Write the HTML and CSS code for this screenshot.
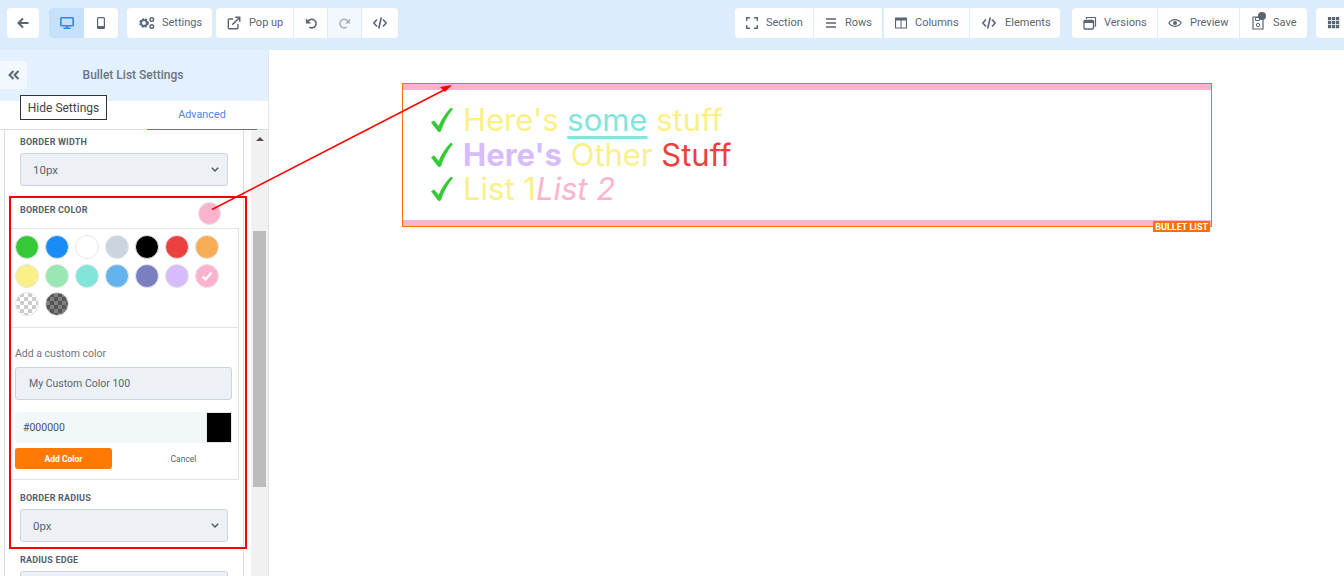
FILE: index.html
```html
<!DOCTYPE html>
<html lang="en">

<head>
    <meta charset="UTF-8">
    <meta name="viewport" content="width=device-width, initial-scale=1.0">
    <title>Bullet List Settings</title>
    <link rel="stylesheet" href="styles.css">
</head>

<body>
    <header class="toolbar">
        <div class="group">
            <button class="tool icon-only back"><svg width="12" height="12" viewBox="0 0 12 12"><path d="M11.500 6H2M6 1.500 1.500 6 6 10.500" fill="none" stroke="#5a6573" stroke-width="2"/></svg></button>
        </div>
        <div class="group devices">
            <button class="tool device active"><svg width="14" height="12" viewBox="0 0 14 12"><rect x=".8" y=".8" width="12.400" height="7.900" rx=".8" fill="none" stroke="#2b86e8" stroke-width="1.600"/><path d="M3.500 11.200h7M7 9v2" stroke="#2b86e8" stroke-width="1.500"/></svg></button>
            <button class="tool device"><svg width="8" height="12" viewBox="0 0 8 12"><rect x=".6" y=".6" width="6.800" height="10.800" rx="1" fill="none" stroke="#5a6573" stroke-width="1.200"/><path d="M.6 9h6.800v2.400H.6z" fill="#5a6573"/></svg></button>
        </div>
        <div class="group">
            <button class="tool settings"><svg width="16" height="16" viewBox="0 0 16 16"><circle cx="5" cy="8" r="3.700" fill="none" stroke="#5a6573" stroke-width="2.200" stroke-dasharray="2 1"/><circle cx="5" cy="8" r="2.800" fill="none" stroke="#5a6573" stroke-width="1.700"/><circle cx="12.800" cy="4.500" r="1.800" fill="none" stroke="#5a6573" stroke-width="1.400"/><circle cx="12.800" cy="11.500" r="1.800" fill="none" stroke="#5a6573" stroke-width="1.400"/></svg>Settings</button>
        </div>
        <div class="group popup-group">
            <button class="tool popup"><svg width="14" height="14" viewBox="0 0 16 16"><path d="M12.500 9v4.500a1 1 0 0 1-1 1h-9a1 1 0 0 1-1-1v-9a1 1 0 0 1 1-1H7" fill="none" stroke="#5a6573" stroke-width="1.600"/><path d="M6 10 14 2M9.500 1.500h5v5" fill="none" stroke="#5a6573" stroke-width="1.800"/></svg>Pop up</button>
            <button class="tool icon-only undo"><svg width="12" height="12" viewBox="0 0 14 14"><path d="M3 6.500A5 5 0 1 1 5 11.800" fill="none" stroke="#5a6573" stroke-width="1.800"/><path d="M1 1.500v6h6z" fill="#5a6573"/></svg></button>
            <button class="tool icon-only redo"><svg width="12" height="12" viewBox="0 0 14 14"><path d="M11 6.500A5 5 0 1 0 9 11.800" fill="none" stroke="#a9b2bd" stroke-width="1.800"/><path d="M13 1.500v6H7z" fill="#a9b2bd"/></svg></button>
            <button class="tool icon-only code"><svg width="14" height="14" viewBox="0 0 14 14"><path d="M4 3.500.8 7 4 10.500M10 3.500 13.200 7 10 10.500M8.300 1.500 5.700 12.500" fill="none" stroke="#5a6573" stroke-width="1.600"/></svg></button>
        </div>
        <div class="spacer"></div>
        <div class="group">
            <button class="tool section"><svg width="12" height="12" viewBox="0 0 12 12"><path d="M.7 4V.7H4M8 .7h3.300V4M11.300 8v3.300H8M4 11.300H.7V8" fill="none" stroke="#5a6573" stroke-width="1.400"/></svg>Section</button>
            <button class="tool rows"><svg width="12" height="12" viewBox="0 0 12 12"><path d="M1 2h10M1 6h10M1 10h10" stroke="#5a6573" stroke-width="1.400"/></svg>Rows</button>
            <button class="tool columns"><svg width="12" height="12" viewBox="0 0 12 12"><path d="M.5 1h11v10H.5z" fill="none" stroke="#5a6573" stroke-width="1.200"/><path d="M.5 1h11v2.500H.5zM5.500 1h1v10h-1z" fill="#5a6573"/></svg>Columns</button>
            <button class="tool elements"><svg width="14" height="14" viewBox="0 0 14 14"><path d="M4 3.500.8 7 4 10.500M10 3.500 13.200 7 10 10.500M8.300 1.500 5.700 12.500" fill="none" stroke="#5a6573" stroke-width="1.600"/></svg>Elements</button>
        </div>
        <div class="group publish-group">
            <button class="tool versions"><svg width="14" height="14" viewBox="0 0 14 14"><rect x="1" y="4.500" width="9.500" height="8.500" rx="1" fill="none" stroke="#5a6573" stroke-width="1.300"/><path d="M1 5h9.500v2H1z" fill="#5a6573"/><path d="M3.500 3V1.500h9V10H11.500" fill="none" stroke="#5a6573" stroke-width="1.200"/></svg>Versions</button>
            <button class="tool preview"><svg width="14" height="14" viewBox="0 0 14 14"><path d="M.8 7C3.800 2.600 10.200 2.600 13.200 7 10.200 11.400 3.800 11.400.8 7z" fill="none" stroke="#5a6573" stroke-width="1.200"/><circle cx="7" cy="7" r="2" fill="#5a6573"/></svg>Preview</button>
            <button class="tool save"><svg width="14" height="14" viewBox="0 0 14 14"><path d="M2 1h8.500L12 2.500V13H2z" fill="none" stroke="#5a6573" stroke-width="1.200"/><path d="M4.500 1.500h4v3h-4z" fill="none" stroke="#5a6573"/><circle cx="7" cy="9" r="1.700" fill="none" stroke="#5a6573"/></svg><span class="dot"></span>Save</button>
        </div>
        <div class="group grid-group">
            <button class="tool grid-btn"><svg width="13" height="13" viewBox="0 0 14 14"><path d="M1 1h3.500v3.500H1zM5.300 1h3.500v3.500H5.300zM9.600 1h3.500v3.500H9.600zM1 5.300h3.500v3.500H1zM5.300 5.300h3.500v3.500H5.300zM9.600 5.300h3.500v3.500H9.600zM1 9.600h3.500v3.500H1zM5.300 9.600h3.500v3.500H5.300zM9.600 9.600h3.500v3.500H9.600z" fill="#5a6573"/></svg></button>
        </div>
    </header>

    <div class="main">
        <aside class="sidebar">
            <div class="side-head">
                <button class="collapse"><svg width="12" height="10" viewBox="0 0 12 10"><path d="M5.500 1 1.500 5l4 4M10.500 1l-4 4 4 4" fill="none" stroke="#5a6573" stroke-width="2"/></svg></button>
                <h2>Bullet List Settings</h2>
                <span class="hint">Hide Settings</span>
            </div>
            <div class="tabs">
                <span class="tab">Advanced</span>
            </div>
            <div class="side-body">
                <div class="panel">
                    <div class="field width-field">
                        <label>BORDER WIDTH</label>
                        <div class="select">10px<svg width="8" height="5" viewBox="0 0 8 5"><path d="M.8.8 4 4 7.200.8" fill="none" stroke="#4a5565" stroke-width="1.400"/></svg></div>
                    </div>
                    <div class="color-head">
                        <label>BORDER COLOR</label>
                        <span class="current"></span>
                    </div>
                    <div class="picker">
                        <div class="swatches">
                            <span class="sw s-green"></span><span class="sw s-blue"></span><span class="sw s-white"></span><span class="sw s-grey"></span><span class="sw s-black"></span><span class="sw s-red"></span><span class="sw s-orange"></span>
                            <span class="sw s-yellow"></span><span class="sw s-mint"></span><span class="sw s-teal"></span><span class="sw s-sky"></span><span class="sw s-indigo"></span><span class="sw s-lilac"></span>
                            <span class="sw s-pink"><svg width="12" height="10" viewBox="0 0 12 10"><path d="M1.500 5.500 4.500 8.500 10.500 1.500" fill="none" stroke="#fff" stroke-width="2.200"/></svg></span>
                            <span class="sw s-clear"></span><span class="sw s-dark"></span>
                        </div>
                        <div class="custom">
                            <p class="custom-title">Add a custom color</p>
                            <div class="name-input">My Custom Color 100</div>
                            <div class="hex-row">
                                <span class="hex">#000000</span>
                                <span class="hex-sample"></span>
                            </div>
                            <div class="actions">
                                <button class="add">Add Color</button>
                                <button class="cancel">Cancel</button>
                            </div>
                        </div>
                    </div>
                    <div class="field radius-field">
                        <label>BORDER RADIUS</label>
                        <div class="select">0px<svg width="8" height="5" viewBox="0 0 8 5"><path d="M.8.8 4 4 7.200.8" fill="none" stroke="#4a5565" stroke-width="1.400"/></svg></div>
                    </div>
                    <div class="field edge-field">
                        <label>RADIUS EDGE</label>
                        <div class="select"></div>
                    </div>
                    <div class="red-box"></div>
                </div>
                <div class="scrollbar">
                    <span class="arrow"></span>
                    <span class="thumb"></span>
                </div>
            </div>
        </aside>

        <main class="canvas">
            <section class="bullet-block">
                <ul class="bullets">
                    <li><svg class="check" width="26" height="26" viewBox="0 0 26 26"><path d="M1.500 15.500 4 13.800 8.800 19.500C11.500 12.500 15.500 6.500 21 1L22.500 2C17 9 13 16 10.700 24Q9.500 25.500 8 24Z" fill="#35c935" stroke="#35c935" stroke-width=".8" stroke-linejoin="round"/></svg><span class="t-yellow">Here's <u class="t-teal">some</u> stuff</span></li>
                    <li><svg class="check" width="26" height="26" viewBox="0 0 26 26"><path d="M1.500 15.500 4 13.800 8.800 19.500C11.500 12.500 15.500 6.500 21 1L22.500 2C17 9 13 16 10.700 24Q9.500 25.500 8 24Z" fill="#35c935" stroke="#35c935" stroke-width=".8" stroke-linejoin="round"/></svg><span class="t-yellow"><b class="t-lilac">Here's</b> Other <span class="t-red">Stuff</span></span></li>
                    <li><svg class="check" width="26" height="26" viewBox="0 0 26 26"><path d="M1.500 15.500 4 13.800 8.800 19.500C11.500 12.500 15.500 6.500 21 1L22.500 2C17 9 13 16 10.700 24Q9.500 25.500 8 24Z" fill="#35c935" stroke="#35c935" stroke-width=".8" stroke-linejoin="round"/></svg><span class="t-yellow">List 1<i class="t-pink">List 2</i></span></li>
                </ul>
                <span class="tag">BULLET LIST</span>
            </section>
        </main>
    </div>

    <svg class="arrow-over" width="1344" height="576" viewBox="0 0 1344 576">
        <path d="M212 209.500 445 89.500" stroke="#f00" stroke-width="1.500" fill="none"/>
        <path d="M452 85 440 87 445 92z" fill="#f00"/>
    </svg>
</body>

</html>
```
FILE: styles.css
```css
* {
    margin: 0;
    padding: 0;
    box-sizing: border-box;
}

html,
body {
    height: 576px;
    overflow: hidden;
}

body {
    font-family: Roboto, "Liberation Sans", sans-serif;
    background-color: #fff;
    color: #4a5565;
    position: relative;
}

button {
    font-family: inherit;
    border: none;
    cursor: pointer;
}

svg {
    flex: none;
}

/* Top toolbar */
.toolbar {
    display: flex;
    height: 50px;
    padding: 8px 0 12px 7px;
    background-color: #dcecfd;
    gap: 9px;
    overflow: hidden;
}

.group {
    display: flex;
    gap: 1px;
    border-radius: 4px;
    overflow: hidden;
}

.devices {
    margin-left: 1px;
    gap: 0;
}

.popup-group {
    margin-left: -5px;
}

.publish-group {
    margin-left: 3px;
}

.spacer {
    flex: 1;
}

.tool {
    display: flex;
    flex: none;
    align-items: center;
    gap: 8px;
    height: 30px;
    padding: 0 0 1px 11px;
    background-color: #fff;
    color: #5a6573;
    font-size: 11px;
    white-space: nowrap;
}

.icon-only {
    justify-content: center;
    padding: 0 0 1px;
}

.back {
    width: 32px;
}

.device {
    width: 34px;
    justify-content: center;
    padding: 0 0 1px;
}

.device.active {
    width: 35px;
    background-color: #c6e1fc;
}

.settings {
    width: 85px;
    padding-left: 12px;
    gap: 7px;
}

.popup {
    width: 77px;
}

.undo {
    width: 33px;
}

.redo {
    width: 33px;
    background-color: #f3f8fe;
}

.code {
    width: 36px;
}

.section {
    width: 78px;
}

.rows {
    width: 68px;
}

.columns {
    width: 85px;
    margin-left: 1px;
}

.elements {
    width: 90px;
    padding-left: 12px;
    gap: 9px;
}

.versions {
    width: 85px;
    gap: 7px;
}

.preview {
    width: 81px;
    padding-left: 10px;
}

.save {
    width: 67px;
    position: relative;
}

.dot {
    position: absolute;
    top: 4px;
    left: 18px;
    width: 8px;
    height: 8px;
    border-radius: 50%;
    background-color: #5a6573;
}

.grid-group {
    margin-right: -12px;
}

.grid-btn {
    width: 40px;
}

/* Sidebar */
.main {
    display: flex;
    height: 526px;
}

.sidebar {
    width: 269px;
    flex: none;
    border-right: 1px solid #e1e5ea;
    display: flex;
    flex-direction: column;
}

.side-head {
    height: 51px;
    padding: 0 2px 2px 0;
    background-color: #e3f1fe;
    display: flex;
    align-items: center;
    justify-content: center;
    position: relative;
}

.side-head h2 {
    font-size: 12px;
    font-weight: 500;
    color: #6b7480;
}

.collapse {
    position: absolute;
    left: 0;
    top: 11px;
    width: 27px;
    height: 28px;
    background-color: #f3f8fe;
    border-radius: 0 4px 4px 0;
}

.hint {
    position: absolute;
    left: 20px;
    top: 45px;
    width: 87px;
    height: 25px;
    border: 1px solid #333;
    background-color: #fff;
    color: #444;
    font-size: 12px;
    line-height: 25px;
    text-align: center;
    z-index: 2;
}

.tabs {
    height: 29px;
    border-bottom: 1px solid #d9dde2;
    position: relative;
}

.tab {
    position: absolute;
    left: 147px;
    width: 110px;
    height: 29px;
    border-bottom: 1px solid #2a84e4;
    color: #4f82e8;
    font-size: 10.800px;
    line-height: 27px;
    text-align: center;
}

.side-body {
    flex: 1;
    display: flex;
    min-height: 0;
}

.panel {
    width: 240px;
    margin-left: 4px;
    border: solid #d5dbe3;
    border-width: 0 1px;
    position: relative;
    flex: none;
}

.scrollbar {
    width: 17px;
    margin-left: 7px;
    background-color: #f1f1f1;
    position: relative;
    flex: none;
}

.arrow {
    position: absolute;
    top: 7px;
    left: 5px;
    border: solid transparent;
    border-width: 0 4px 4px;
    border-bottom-color: #505050;
}

.thumb {
    position: absolute;
    top: 101px;
    left: 2px;
    width: 13px;
    height: 256px;
    background-color: #bcbcbc;
}

label {
    display: block;
    font-size: 9px;
    font-weight: 700;
    letter-spacing: 0.2px;
    color: #555f6d;
}

.field {
    padding: 0 15px;
}

.width-field {
    padding-top: 7px;
    height: 68px;
}

.select {
    height: 33px;
    margin-top: 6px;
    padding: 0 8px 0 12px;
    display: flex;
    align-items: center;
    justify-content: space-between;
    background-color: #edf1f6;
    border: 1px solid #cbd5e0;
    border-radius: 3px;
    font-size: 11.500px;
    color: #5a6573;
}

.color-head {
    height: 30px;
    padding: 7px 22px 0 15px;
    display: flex;
    justify-content: space-between;
    align-items: flex-start;
}

.current {
    width: 23px;
    height: 23px;
    margin-top: -3px;
    border-radius: 50%;
    background-color: #fdb3cd;
    border: 1px solid #e4e7eb;
}

.picker {
    margin-left: 4px;
    width: 230px;
    height: 252px;
    border: 1px solid #dfe3ea;
}

.swatches {
    height: 99px;
    padding: 6px 0 0 5px;
    display: grid;
    grid-template-columns: repeat(7, 24px);
    grid-auto-rows: 24px;
    column-gap: 6px;
    row-gap: 4.500px;
    border-bottom: 1px solid #dfe3ea;
}

.sw {
    width: 24px;
    height: 24px;
    border-radius: 50%;
    border: 1px solid #e4e7eb;
    display: flex;
    align-items: center;
    justify-content: center;
}

.s-green { background-color: #35c935; }
.s-blue { background-color: #1a8cf5; }
.s-white { background-color: #fff; }
.s-grey { background-color: #cbd5e0; }
.s-black { background-color: #000; }
.s-red { background-color: #eb4040; }
.s-orange { background-color: #f6ad55; }
.s-yellow { background-color: #faf089; }
.s-mint { background-color: #9ae6b4; }
.s-teal { background-color: #81e6d9; }
.s-sky { background-color: #63b3ed; }
.s-indigo { background-color: #7a7fbf; }
.s-lilac { background-color: #d6bcfa; }
.s-pink { background-color: #fdb3cd; }

.s-clear {
    background: repeating-conic-gradient(#ccc 0 25%, #fff 0 50%) 0 0 / 8px 8px;
}

.s-dark {
    background: repeating-conic-gradient(#555 0 25%, #808080 0 50%) 0 0 / 8px 8px;
}

.custom {
    padding: 19px 6px 0 5px;
}

.custom-title {
    font-size: 10.500px;
    color: #6b7480;
    margin-bottom: 7px;
}

.name-input {
    height: 33px;
    padding-left: 13px;
    background-color: #edf1f6;
    border: 1px solid #cbd5e0;
    border-radius: 3px;
    font-size: 10.500px;
    line-height: 31px;
    color: #5a6573;
}

.hex-row {
    display: flex;
    justify-content: space-between;
    height: 31px;
    margin-top: 12px;
    background-color: #f2f7fa;
    border-radius: 3px 0 0 3px;
}

.hex {
    padding-left: 8px;
    font-size: 10.500px;
    line-height: 31px;
}

.hex-sample {
    width: 26px;
    background-color: #000;
    border: 1px solid #e4e7eb;
}

.actions {
    display: flex;
    margin-top: 5px;
}

.add {
    width: 97px;
    height: 21px;
    background-color: #ff7a05;
    border-radius: 3px;
    color: #fff;
    font-size: 8.500px;
    font-weight: 700;
}

.cancel {
    flex: 1;
    padding-left: 23px;
    background: none;
    color: #555f6d;
    font-size: 8.500px;
}

.radius-field {
    padding-top: 13px;
    height: 69px;
}

.edge-field {
    padding-top: 6px;
}

.red-box {
    position: absolute;
    left: 4px;
    top: 66px;
    width: 238px;
    height: 353px;
    border: 2px solid #f00;
}

/* Canvas */
.canvas {
    flex: 1;
    padding: 33px 0 0 133px;
}

.bullet-block {
    width: 810px;
    height: 144px;
    border: 1px solid #ff6f00;
    position: relative;
    background-color: #fff;
}

.bullet-block::before,
.bullet-block::after {
    content: "";
    position: absolute;
    left: 0;
    right: 0;
    height: 6px;
    background-color: #fdb3cd;
}

.bullet-block::before {
    top: 0;
}

.bullet-block::after {
    bottom: 0;
}

.bullets {
    list-style: none;
    padding: 19px 0 0 27px;
    font-family: Inter, "Noto Sans", sans-serif;
    font-size: 31px;
    line-height: 34.500px;
}

.bullets li {
    display: flex;
    align-items: center;
    gap: 7px;
    white-space: pre;
}

.bullets u {
    text-decoration-thickness: 2.500px;
    text-underline-offset: 5px;
}

.t-yellow { color: #faf089; }
.t-teal { color: #81e6d9; }
.t-lilac { color: #d6bcfa; }
.t-red { color: #eb4040; }
.t-pink { color: #fdb3cd; }

.tag {
    position: absolute;
    right: 1px;
    bottom: -6px;
    height: 11px;
    padding: 0 2px;
    background-color: #ff6f00;
    color: #fff;
    font-size: 9px;
    font-weight: 700;
    line-height: 12px;
    border-radius: 1px;
    z-index: 1;
}

.arrow-over {
    position: absolute;
    left: 0;
    top: 0;
    pointer-events: none;
}
```
